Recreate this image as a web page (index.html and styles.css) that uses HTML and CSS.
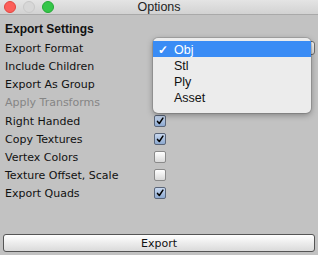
FILE: index.html
```html
<!DOCTYPE html>
<html lang="en">
<head>
  <meta charset="UTF-8">
  <title>Options</title>
  <link rel="stylesheet" href="styles.css">
</head>
<body>
  <div class="window">
    <div class="titlebar">
      <div class="lights">
        <span class="light red"></span>
        <span class="light gray"></span>
        <span class="light green"></span>
      </div>
      <span class="title">Options</span>
    </div>
    <div class="content">
      <div class="header">Export Settings</div>
      <div class="row">
        <label>Export Format</label>
        <div class="field"></div>
      </div>
      <div class="row"><label>Include Children</label></div>
      <div class="row"><label>Export As Group</label></div>
      <div class="row disabled"><label>Apply Transforms</label></div>
      <div class="row first-check"><label>Right Handed</label><span class="check on"><svg viewBox="0 0 12 12"><path d="M3 6.5 L5.2 9 L9.5 2.5" /></svg></span></div>
      <div class="row"><label>Copy Textures</label><span class="check on"><svg viewBox="0 0 12 12"><path d="M3 6.5 L5.2 9 L9.5 2.5" /></svg></span></div>
      <div class="row"><label>Vertex Colors</label><span class="check"></span></div>
      <div class="row"><label>Texture Offset, Scale</label><span class="check"></span></div>
      <div class="row"><label>Export Quads</label><span class="check on"><svg viewBox="0 0 12 12"><path d="M3 6.5 L5.2 9 L9.5 2.5" /></svg></span></div>
    </div>
    <div class="footer">
      <button class="export">Export</button>
    </div>

    <ul class="menu">
      <li class="selected"><span class="tick">&#10003;</span>Obj</li>
      <li>Stl</li>
      <li>Ply</li>
      <li>Asset</li>
    </ul>
  </div>
</body>
</html>
```

FILE: styles.css
```css
html, body { margin: 0; padding: 0; }
body { width: 318px; height: 255px; overflow: hidden; background: #c2c2c2; font-family: "DejaVu Sans", sans-serif; font-size: 11px; color: #111; }
.window { position: relative; height: 255px; display: flex; flex-direction: column; }

.titlebar { height: 14px; flex: none; display: flex; align-items: center; justify-content: center; position: relative; background: linear-gradient(#e4e4e4, #d2d2d2); border-bottom: 1px solid #a9a9a9; }
.lights { position: absolute; left: 4px; top: 1px; display: flex; gap: 7px; }
.light { width: 12px; height: 12px; border-radius: 50%; display: block; box-sizing: border-box; }
.light.red { background: #fc5f5a; border: 1px solid #e2463f; }
.light.gray { background: #d7d7d7; border: 1px solid #c8c8c8; }
.light.green { background: #35c649; border: 1px solid #24a935; }
.title { font-family: "Liberation Sans", sans-serif; font-size: 12.5px; color: #222; }

.content { flex: 1; padding: 5px 0 0 5px; }
.header { height: 19px; line-height: 18px; font-family: "Liberation Sans", sans-serif; font-size: 12px; font-weight: bold; }
.row { height: 18px; display: flex; align-items: center; position: relative; }
.row.first-check { margin-top: 1px; }
.row label { width: 149px; flex: none; }
.row.disabled { color: #858585; }

.field { position: absolute; left: 148px; right: 3px; top: 2px; height: 14px; box-sizing: border-box; border: 1px solid #6f6f6f; border-radius: 3px; background: linear-gradient(#fbfbfb, #dedede); }

.check { width: 12px; height: 12px; box-sizing: border-box; border: 1px solid #8a8a8a; border-radius: 2px; background: linear-gradient(#ffffff, #d9d9d9); display: flex; }
.check.on { background: linear-gradient(#c8d8ef, #8ca8cf); border-color: #5a6578; }
.check svg { width: 12px; height: 12px; margin: -1px 0 0 0; }
.check path { fill: none; stroke: #000; stroke-width: 1.8; stroke-linecap: round; stroke-linejoin: round; }

.footer { flex: none; padding: 0 3px 3px 3px; }
.export { display: block; width: 100%; height: 18px; margin: 0; padding: 0; font-family: "DejaVu Sans", sans-serif; font-size: 11px; color: #111; border: 1px solid #555; border-radius: 3px; background: linear-gradient(#ffffff, #dadada); }

.menu { position: absolute; left: 153px; top: 38px; width: 158px; margin: 0; padding: 3px 0 7px 0; list-style: none; background: #ececec; border-radius: 5px; box-shadow: 0 2px 6px rgba(0, 0, 0, 0.35), 0 0 0 1px rgba(0, 0, 0, 0.12); font-family: "Liberation Sans", sans-serif; font-size: 12.5px; color: #111; }
.menu li { height: 16px; line-height: 17px; padding-left: 21px; position: relative; }
.menu li.selected { background: #3a8cf5; color: #fff; height: 16px; line-height: 18px; margin-bottom: 1px; }
.tick { position: absolute; left: 5px; font-size: 12px; font-weight: bold; }
```
